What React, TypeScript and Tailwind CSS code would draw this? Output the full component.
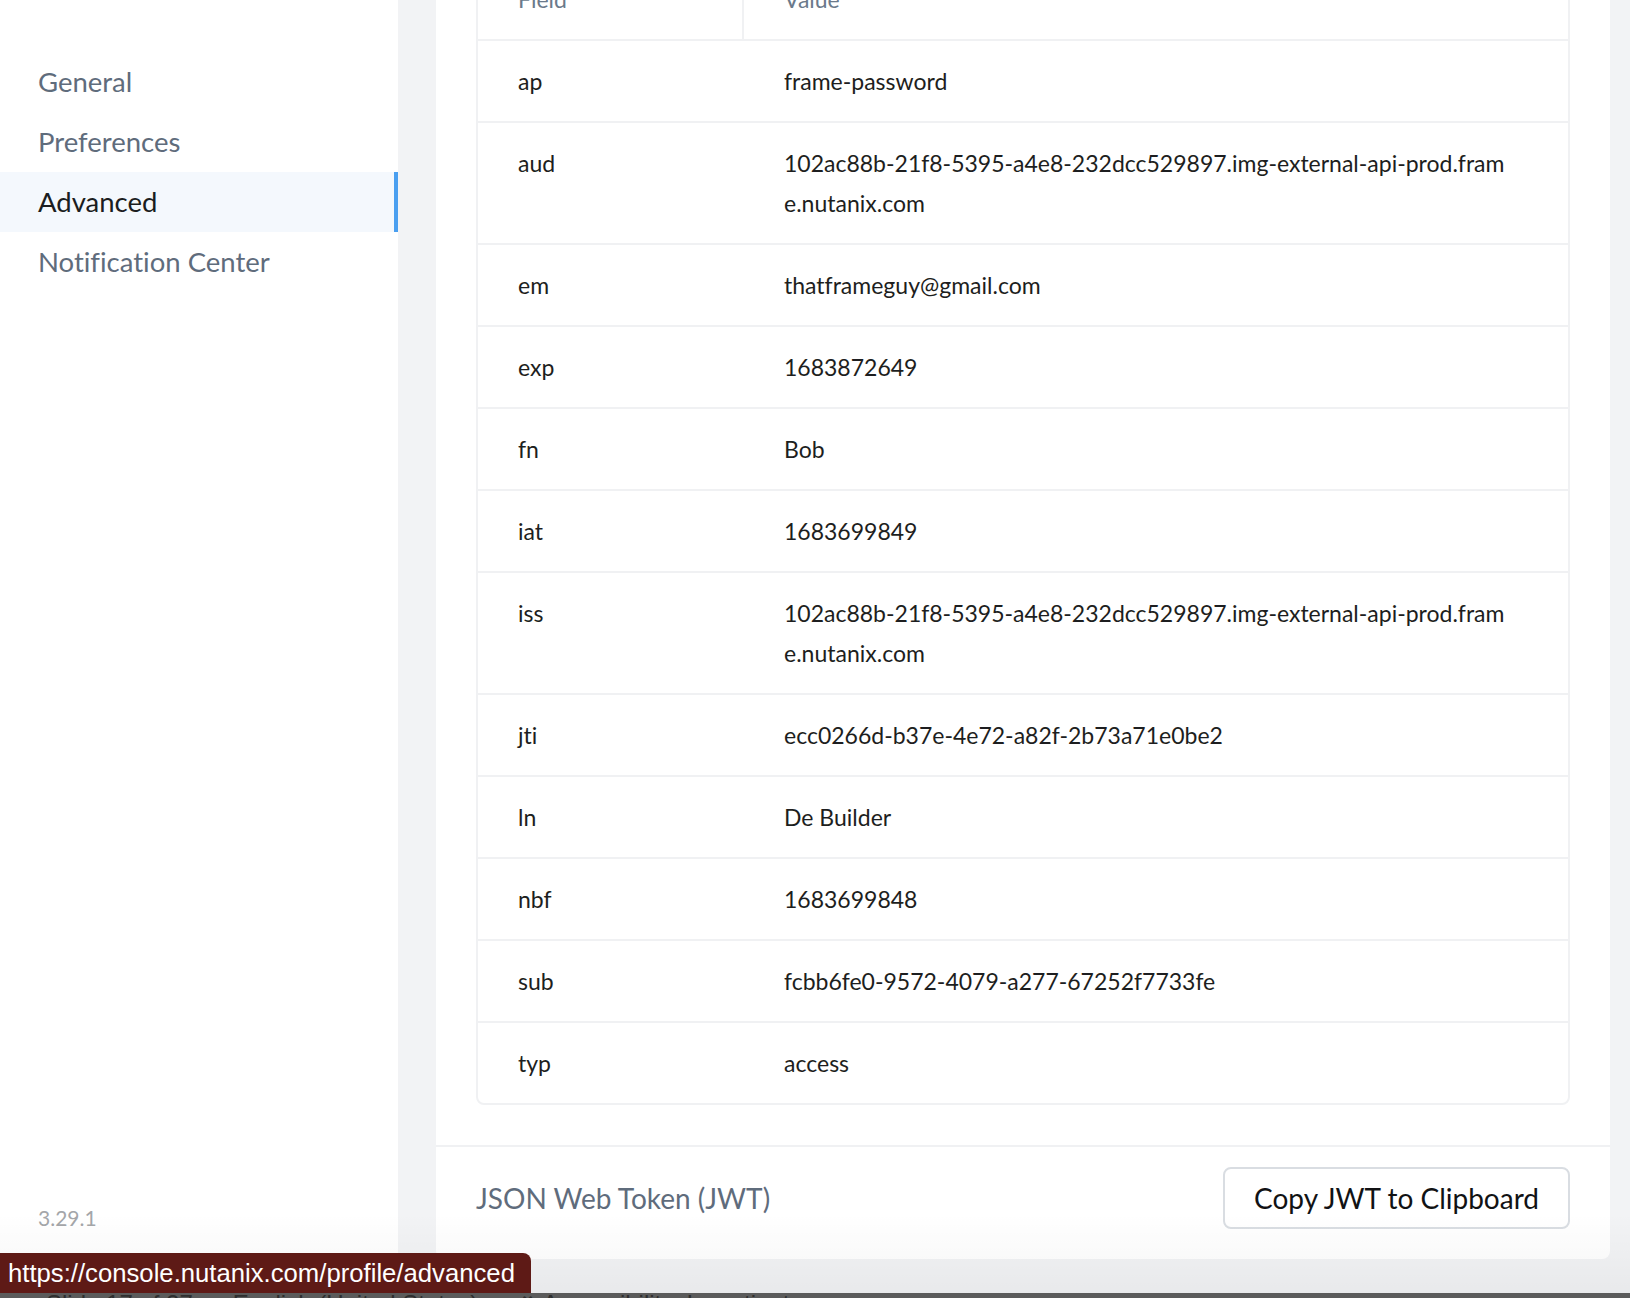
import React from 'react';

type Claim = { field: string; value: string };

// long values wrap exactly where the reference breaks them
const claims: Claim[] = [
  { field: 'ap', value: 'frame-password' },
  { field: 'aud', value: '102ac88b-21f8-5395-a4e8-232dcc529897.img-external-api-prod.fram\ne.nutanix.com' },
  { field: 'em', value: 'thatframeguy@gmail.com' },
  { field: 'exp', value: '1683872649' },
  { field: 'fn', value: 'Bob' },
  { field: 'iat', value: '1683699849' },
  { field: 'iss', value: '102ac88b-21f8-5395-a4e8-232dcc529897.img-external-api-prod.fram\ne.nutanix.com' },
  { field: 'jti', value: 'ecc0266d-b37e-4e72-a82f-2b73a71e0be2' },
  { field: 'ln', value: 'De Builder' },
  { field: 'nbf', value: '1683699848' },
  { field: 'sub', value: 'fcbb6fe0-9572-4079-a277-67252f7733fe' },
  { field: 'typ', value: 'access' },
];

const navItems = ['General', 'Preferences', 'Advanced', 'Notification Center'];

function Sidebar() {
  return (
    <aside className="w-[398px] shrink-0 bg-white flex flex-col pt-[52px]">
      <nav className="flex flex-col">
        {navItems.map((item) => {
          const active = item === 'Advanced';
          return (
            <div
              key={item}
              className={
                active
                  ? 'h-[60px] flex items-center pl-[38px] text-[27.5px] text-[#1b1d21] bg-[#f4f8fd] border-r-4 border-[#4a9ff0]'
                  : 'h-[60px] flex items-center pl-[38px] text-[27.5px] text-[#5f6c7c]'
              }
            >
              {item}
            </div>
          );
        })}
      </nav>
      <div className="mt-auto pl-[38px] pb-[66px] text-[21px] leading-[28px] text-[#a4a6a9]">3.29.1</div>
    </aside>
  );
}

function ClaimsTable() {
  return (
    <div className="border-2 border-[#f0f1f3] rounded-lg">
      <div className="grid grid-cols-[266px_1fr] text-[23px] leading-[40px] text-[#6b7a8b]">
        <div className="px-10 py-5 border-r-2 border-[#f0f1f3]">Field</div>
        <div className="px-10 py-5">Value</div>
      </div>
      {claims.map((c) => (
        <div
          key={c.field}
          className="grid grid-cols-[266px_1fr] border-t-2 border-[#f0f1f3] text-[23px] leading-[40px] text-[#1d1e20]"
        >
          <div className="px-10 py-5">{c.field}</div>
          <div className="px-10 py-5 whitespace-pre-line break-all">{c.value}</div>
        </div>
      ))}
    </div>
  );
}

export default function App() {
  return (
    <div
      className="relative w-[1630px] h-[1298px] overflow-hidden bg-[#f2f3f5] flex"
      style={{ fontFamily: 'Lato, "Noto Sans", sans-serif', fontVariantLigatures: 'none' }}
    >
      <Sidebar />
      <main className="flex-1 flex flex-col justify-end overflow-hidden pl-[38px] pr-[20px] pb-[39px]">
        <div className="bg-white rounded-lg flex flex-col shrink-0">
          <div className="px-10 pt-10 pb-10">
            <ClaimsTable />
          </div>
          <div className="border-t-2 border-[#f0f1f3] pt-[20px] pb-[30px] px-10 flex items-center justify-between">
            <span className="text-[28px] text-[#5f6c7c]">JSON Web Token (JWT)</span>
            <button className="h-[62px] w-[347px] rounded-lg border-2 border-[#d9dde2] bg-white text-[28px] text-[#111214]">
              Copy JWT to Clipboard
            </button>
          </div>
        </div>
      </main>

      {/* bottom shade from the browser chrome */}
      <div className="pointer-events-none absolute left-0 right-0 bottom-[5px] h-[80px] bg-gradient-to-b from-transparent to-black/[0.04]" />

      {/* status bar link preview */}
      <div
        className="absolute left-0 bottom-[5px] h-[40px] w-[531px] bg-[#5e1a16] rounded-tr-lg flex items-center pl-[8px] text-white text-[25.7px]"
        style={{ fontFamily: '"Liberation Sans", Arial, sans-serif' }}
      >
        https://console.nutanix.com/profile/advanced
      </div>

      {/* strip of the window below */}
      <div
        className="absolute left-0 right-0 bottom-0 h-[5px] bg-[#5b5b5b] overflow-hidden text-[24px] leading-[24px] text-[#2e2e2e] whitespace-nowrap"
        style={{ fontFamily: '"Liberation Sans", Arial, sans-serif' }}
      >
        <div className="pl-[46px] -mt-[1px] flex gap-[40px]">
          <span>Slide 17 of 27</span>
          <span>English (United States)</span>
          <span>⛭ Accessibility: Investigate</span>
        </div>
      </div>
    </div>
  );
}
